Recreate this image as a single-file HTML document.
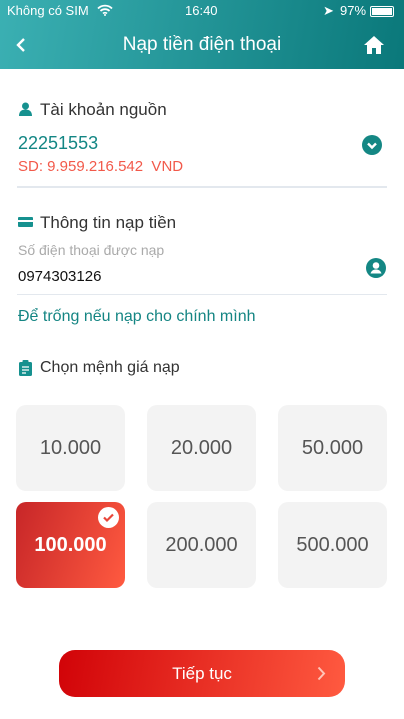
<!DOCTYPE html><html><head><meta charset="utf-8"><style>
*{margin:0;padding:0;box-sizing:border-box}
body{width:404px;height:719px;background:#fff;font-family:"Liberation Sans",sans-serif;position:relative;overflow:hidden}
.hdr{position:absolute;left:0;top:0;width:404px;height:69px;background:linear-gradient(100deg,#3bb0b3,#0a787a)}
.a{position:absolute;white-space:nowrap}
.box{position:absolute;width:109px;height:86px;border-radius:10px;background:#f3f3f3;color:#555;font-size:20px;text-align:center;line-height:86px}
.line{position:absolute;left:17px;width:370px;height:1px;background:#e3e8ee}
</style></head><body>
<div class="hdr">
<div class="a" style="left:7px;top:3px;font-size:13px;color:#fff">Không có SIM</div>
<svg class="a" style="left:97px;top:4px" width="16" height="12" viewBox="0 0 16 12"><path d="M1 4.5a10 10 0 0 1 14 0M3.5 7a6.5 6.5 0 0 1 9 0M6 9.5a3 3 0 0 1 4 0" stroke="#fff" stroke-width="1.8" fill="none"/><circle cx="8" cy="11" r="1" fill="#fff"/></svg>
<div class="a" style="left:185px;top:3px;font-size:13px;color:#fff">16:40</div>
<div class="a" style="left:323px;top:3px;font-size:13px;color:#fff">➤</div>
<div class="a" style="left:340px;top:3px;font-size:13px;color:#fff">97%</div>
<div class="a" style="left:370px;top:6px;width:24px;height:11px;border:1px solid #fff;border-radius:2px;padding:1px"><div style="width:100%;height:100%;background:#fff"></div></div>
<svg class="a" style="left:15px;top:37px" width="12" height="16" viewBox="0 0 12 16"><path d="M9 2L3 8l6 6" stroke="#fff" stroke-width="2.4" fill="none"/></svg>
<div class="a" style="left:0;width:404px;text-align:center;top:34px;font-size:19px;color:#fff">Nạp tiền điện thoại</div>
<svg class="a" style="left:363px;top:35px" width="22" height="20" viewBox="0 0 22 20"><path d="M11 1L1 10h3v9h5v-6h4v6h5v-9h3z" fill="#fff"/></svg>
</div>
<svg class="a" style="left:19px;top:102px" width="13" height="14" viewBox="0 0 13 14"><circle cx="6.5" cy="4" r="3.5" fill="#16918f"/><path d="M0 14c0-5 3-6.5 6.5-6.5S13 9 13 14z" fill="#16918f"/></svg>
<div class="a" style="left:40px;top:100px;font-size:17px;color:#333">Tài khoản nguồn</div>
<div class="a" style="left:18px;top:133px;font-size:18px;color:#138684">22251553</div>
<div class="a" style="left:18px;top:158px;font-size:15px;color:#f2594a">SD: 9.959.216.542 &nbsp;VND</div>
<svg class="a" style="left:362px;top:135px" width="20" height="20" viewBox="0 0 20 20"><circle cx="10" cy="10" r="10" fill="#148784"/><path d="M6 8.5l4 4 4-4" stroke="#fff" stroke-width="2.4" fill="none"/></svg>
<div class="line" style="top:186px;height:2px"></div>
<div class="a" style="left:18px;top:217px;width:15px;height:10px;background:#16918f;border-radius:1px"><div style="margin-top:3px;height:2px;background:#fff"></div></div>
<div class="a" style="left:40px;top:213px;font-size:17px;color:#333">Thông tin nạp tiền</div>
<div class="a" style="left:18px;top:242px;font-size:14px;color:#aaa">Số điện thoại được nạp</div>
<div class="a" style="left:18px;top:268px;font-size:15px;color:#111">0974303126</div>
<svg class="a" style="left:366px;top:258px" width="20" height="20" viewBox="0 0 20 20"><circle cx="10" cy="10" r="10" fill="#148784"/><circle cx="10" cy="7.5" r="3.3" fill="#fff"/><path d="M4.5 15.5c1-3 3-4 5.5-4s4.5 1 5.5 4" fill="#fff"/></svg>
<div class="line" style="top:294px"></div>
<div class="a" style="left:18px;top:308px;font-size:16px;color:#148583">Để trống nếu nạp cho chính mình</div>
<svg class="a" style="left:19px;top:360px" width="13" height="16" viewBox="0 0 13 16"><rect x="0" y="2" width="13" height="14" rx="1.5" fill="#16918f"/><rect x="3.5" y="0" width="6" height="3" rx="1" fill="#16918f"/><path d="M3 7h7M3 10h7M3 13h4" stroke="#fff" stroke-width="1.3"/></svg>
<div class="a" style="left:40px;top:359px;font-size:16px;color:#333">Chọn mệnh giá nạp</div>
<div class="box" style="left:16px;top:405px">10.000</div>
<div class="box" style="left:147px;top:405px">20.000</div>
<div class="box" style="left:278px;top:405px">50.000</div>
<div class="box" style="left:16px;top:502px;background:linear-gradient(110deg,#c72628,#ff5a40);color:#fff;font-weight:bold">100.000
<svg style="position:absolute;left:82px;top:5px" width="21" height="21" viewBox="0 0 21 21"><circle cx="10.5" cy="10.5" r="10.5" fill="#fff"/><path d="M6 10.5l3 3 6-6" stroke="#e8463a" stroke-width="2.2" fill="none"/></svg></div>
<div class="box" style="left:147px;top:502px">200.000</div>
<div class="box" style="left:278px;top:502px">500.000</div>
<div class="a" style="left:59px;top:650px;width:286px;height:47px;border-radius:16px;background:linear-gradient(100deg,#d10308,#ff5a40);color:#fff;font-size:17px;text-align:center;line-height:47px">Tiếp tục
<svg style="position:absolute;left:258px;top:16px" width="9" height="15" viewBox="0 0 9 15"><path d="M1.5 1.5l5.5 6-5.5 6" stroke="#ffc4b8" stroke-width="2" fill="none"/></svg></div>
</body></html>
